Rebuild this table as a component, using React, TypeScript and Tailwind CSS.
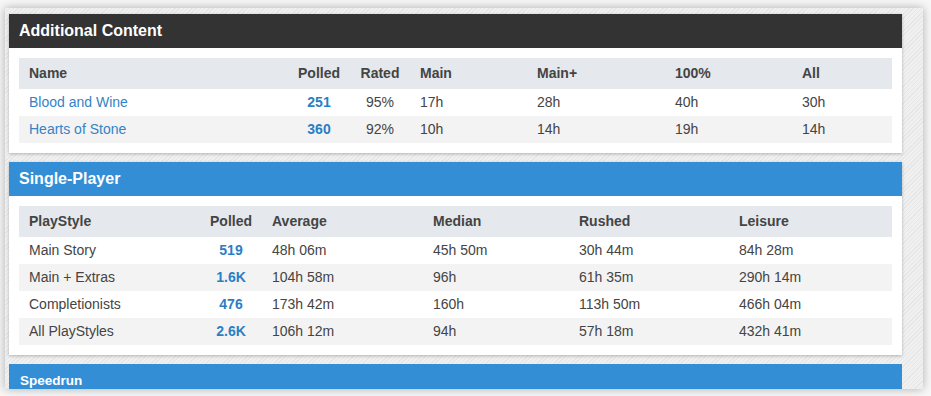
import React from "react";

type Col = { label: string; w: string; align?: "center" | "left" };

const dlcCols: Col[] = [
  { label: "Name", w: "w-[269px]" },
  { label: "Polled", w: "w-[62px]", align: "center" },
  { label: "Rated", w: "w-[60px]", align: "center" },
  { label: "Main", w: "w-[117px]" },
  { label: "Main+", w: "w-[138px]" },
  { label: "100%", w: "w-[127px]" },
  { label: "All", w: "w-[100px]" },
];

const dlcRows = [
  ["Blood and Wine", "251", "95%", "17h", "28h", "40h", "30h"],
  ["Hearts of Stone", "360", "92%", "10h", "14h", "19h", "14h"],
];

const spCols: Col[] = [
  { label: "PlayStyle", w: "w-[181px]" },
  { label: "Polled", w: "w-[62px]", align: "center" },
  { label: "Average", w: "w-[161px]" },
  { label: "Median", w: "w-[146px]" },
  { label: "Rushed", w: "w-[160px]" },
  { label: "Leisure", w: "w-[163px]" },
];

const spRows = [
  ["Main Story", "519", "48h 06m", "45h 50m", "30h 44m", "84h 28m"],
  ["Main + Extras", "1.6K", "104h 58m", "96h", "61h 35m", "290h 14m"],
  ["Completionists", "476", "173h 42m", "160h", "113h 50m", "466h 04m"],
  ["All PlayStyles", "2.6K", "106h 12m", "94h", "57h 18m", "432h 41m"],
];

function Panel({
  title,
  dark,
  children,
}: {
  title: string;
  dark?: boolean;
  children: React.ReactNode;
}) {
  return (
    <section className="bg-white shadow-[0_1px_3px_rgba(0,0,0,0.25)]">
      <h2
        className={
          (dark ? "bg-[#333333]" : "bg-[#338ed6]") +
          " h-[34px] flex items-center pl-[10px] text-white font-bold text-[16px]"
        }
      >
        {title}
      </h2>
      <div className="p-[10px]">{children}</div>
    </section>
  );
}

function DataTable({ cols, rows, linkFirst }: { cols: Col[]; rows: string[][]; linkFirst?: boolean }) {
  return (
    <table className="w-full table-fixed border-collapse text-[14px] text-[#444]">
      <thead>
        <tr className="bg-[#e5e8ec] h-[31px]">
          {cols.map((c) => (
            <th
              key={c.label}
              className={
                c.w +
                " font-bold px-[10px] " +
                (c.align === "center" ? "text-center" : "text-left")
              }
            >
              {c.label}
            </th>
          ))}
        </tr>
      </thead>
      <tbody>
        {rows.map((r, i) => (
          <tr key={r[0]} className={(i % 2 ? "bg-[#f3f3f3]" : "bg-white") + " h-[27px]"}>
            {r.map((v, j) => (
              <td
                key={j}
                className={
                  "px-[10px] whitespace-nowrap " +
                  (j === 1
                    ? "text-center font-bold text-[#2a7fc4]"
                    : cols[j].align === "center"
                    ? "text-center"
                    : "text-left") +
                  (j === 0 && linkFirst ? " text-[#3483c7]" : "")
                }
              >
                {v}
              </td>
            ))}
          </tr>
        ))}
      </tbody>
    </table>
  );
}

export default function App() {
  return (
    <div
      className="w-[931px] h-[396px] overflow-hidden bg-[#f7f7f7]"
      style={{ fontFamily: '"Liberation Sans", Arial, sans-serif' }}
    >
      <div className="ml-[5px] mt-[8px] w-[918px] h-[381px] overflow-hidden shadow-[0_0_9px_rgba(0,0,0,0.3)] bg-[repeating-linear-gradient(135deg,#e6e6e6_0px,#e6e6e6_1px,#f0f0f0_1px,#f0f0f0_3px)] pl-[4px] pt-[6px]">
        <div className="w-[893px] flex flex-col gap-[9px]">
          <Panel title="Additional Content" dark>
            <DataTable cols={dlcCols} rows={dlcRows} linkFirst />
          </Panel>
          <Panel title="Single-Player">
            <DataTable cols={spCols} rows={spRows} />
          </Panel>
          <section className="bg-[#338ed6] h-[34px] flex items-center pl-[11px] text-white font-bold text-[13.5px]">
            Speedrun
          </section>
        </div>
      </div>
    </div>
  );
}
